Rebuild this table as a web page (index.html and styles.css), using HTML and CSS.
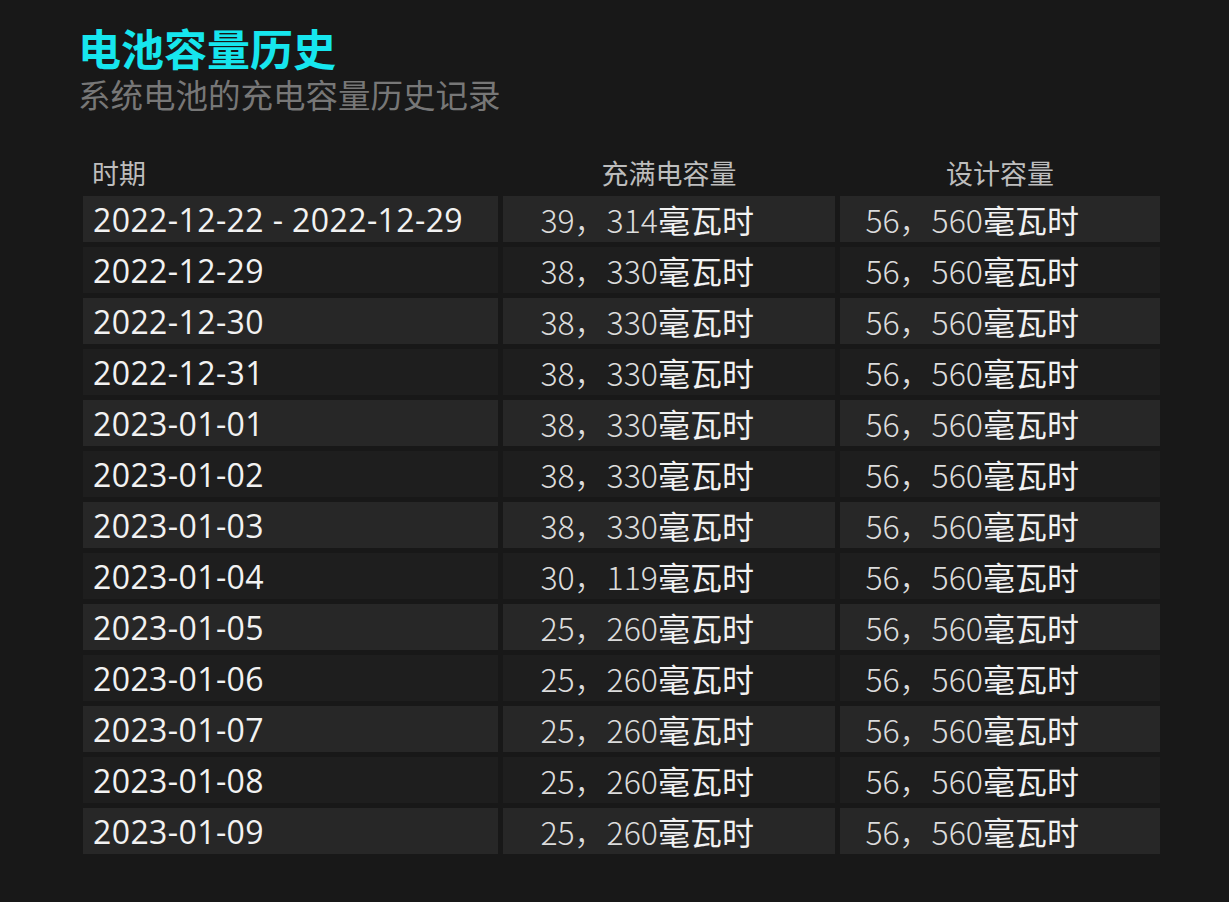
FILE: index.html
```html
<!DOCTYPE html>
<html lang="zh-CN">
<head>
<meta charset="utf-8">
<title>电池容量历史</title>
<link rel="stylesheet" href="styles.css">
</head>
<body>
<main class="page">
  <header class="heading">
    <h1 class="title">电池容量历史</h1>
    <p class="subtitle">系统电池的充电容量历史记录</p>
  </header>
  <section class="table">
    <div class="row head">
      <div class="cell first">时期</div>
      <div class="cell center">充满电容量</div>
      <div class="cell center">设计容量</div>
    </div>
    <div class="row"><div class="cell first">2022-12-22 - 2022-12-29</div><div class="cell num"><span class="n">39，314</span>毫瓦时</div><div class="cell num"><span class="n">56，560</span>毫瓦时</div></div>
    <div class="row"><div class="cell first">2022-12-29</div><div class="cell num"><span class="n">38，330</span>毫瓦时</div><div class="cell num"><span class="n">56，560</span>毫瓦时</div></div>
    <div class="row"><div class="cell first">2022-12-30</div><div class="cell num"><span class="n">38，330</span>毫瓦时</div><div class="cell num"><span class="n">56，560</span>毫瓦时</div></div>
    <div class="row"><div class="cell first">2022-12-31</div><div class="cell num"><span class="n">38，330</span>毫瓦时</div><div class="cell num"><span class="n">56，560</span>毫瓦时</div></div>
    <div class="row"><div class="cell first">2023-01-01</div><div class="cell num"><span class="n">38，330</span>毫瓦时</div><div class="cell num"><span class="n">56，560</span>毫瓦时</div></div>
    <div class="row"><div class="cell first">2023-01-02</div><div class="cell num"><span class="n">38，330</span>毫瓦时</div><div class="cell num"><span class="n">56，560</span>毫瓦时</div></div>
    <div class="row"><div class="cell first">2023-01-03</div><div class="cell num"><span class="n">38，330</span>毫瓦时</div><div class="cell num"><span class="n">56，560</span>毫瓦时</div></div>
    <div class="row"><div class="cell first">2023-01-04</div><div class="cell num"><span class="n">30，119</span>毫瓦时</div><div class="cell num"><span class="n">56，560</span>毫瓦时</div></div>
    <div class="row"><div class="cell first">2023-01-05</div><div class="cell num"><span class="n">25，260</span>毫瓦时</div><div class="cell num"><span class="n">56，560</span>毫瓦时</div></div>
    <div class="row"><div class="cell first">2023-01-06</div><div class="cell num"><span class="n">25，260</span>毫瓦时</div><div class="cell num"><span class="n">56，560</span>毫瓦时</div></div>
    <div class="row"><div class="cell first">2023-01-07</div><div class="cell num"><span class="n">25，260</span>毫瓦时</div><div class="cell num"><span class="n">56，560</span>毫瓦时</div></div>
    <div class="row"><div class="cell first">2023-01-08</div><div class="cell num"><span class="n">25，260</span>毫瓦时</div><div class="cell num"><span class="n">56，560</span>毫瓦时</div></div>
    <div class="row"><div class="cell first">2023-01-09</div><div class="cell num"><span class="n">25，260</span>毫瓦时</div><div class="cell num"><span class="n">56，560</span>毫瓦时</div></div>
  </section>
</main>
</body>
</html>
```
FILE: styles.css
```css
html, body {
  margin: 0;
  padding: 0;
  background: #181818;
}
body {
  font-family: "Open Sans", "Noto Sans CJK SC", sans-serif;
  color: #f2f2f2;
}
.page {
  padding: 22px 0 0 78px;
}
.heading {
  display: flex;
  flex-direction: column;
  gap: 2px;
}
.title {
  margin: 0;
  font-family: "Noto Sans CJK SC", sans-serif;
  font-size: 43px;
  line-height: 51px;
  font-weight: 700;
  color: #16e6ee;
}
.subtitle {
  margin: 0;
  font-family: "Noto Sans CJK SC", sans-serif;
  font-size: 32.5px;
  line-height: 38px;
  color: #777777;
}
.table {
  margin: 41px 0 0 5px;
  display: flex;
  flex-direction: column;
  gap: 5px;
  width: 1077px;
}
.row {
  display: grid;
  grid-template-columns: 415px 332px 320px;
  column-gap: 5px;
}
.cell {
  height: 46px;
  display: flex;
  align-items: center;
  font-size: 32px;
  white-space: nowrap;
}
.row:nth-child(even) .cell { background: #272727; }
.row:nth-child(odd) .cell { background: #1e1e1e; }
.row.head .cell {
  background: transparent;
  height: 37px;
  font-family: "Noto Sans CJK SC", sans-serif;
  font-size: 27px;
  color: #bdbdbd;
}
.first {
  padding-left: 10px;
  letter-spacing: 0.4px;
}
.head .first {
  padding-left: 9px;
  letter-spacing: 0;
}
.center {
  justify-content: center;
}
.num {
  justify-content: flex-end;
  padding-right: 81px;
}
.n {
  font-family: "Noto Sans CJK SC", sans-serif;
  font-weight: 300;
  font-size: 32px;
  color: #dcdcdc;
  letter-spacing: 0;
}
```
